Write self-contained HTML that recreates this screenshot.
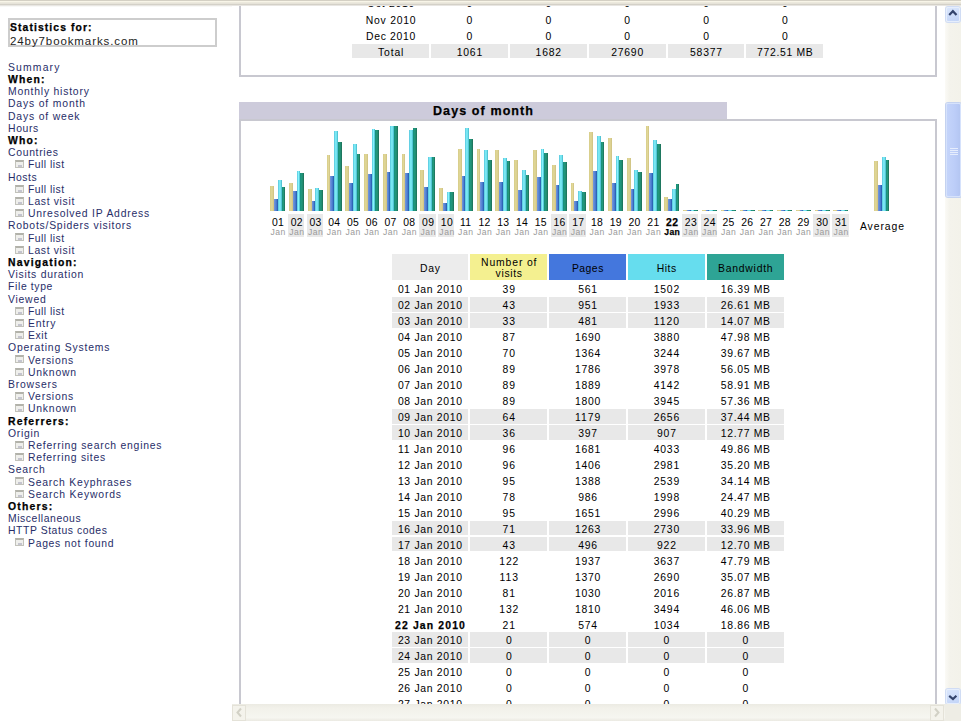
<!DOCTYPE html>
<html><head><meta charset="utf-8"><title>AWStats</title>
<style>
*{margin:0;padding:0;box-sizing:border-box}
html,body{width:961px;height:721px;overflow:hidden;background:#fff}
body{position:relative;font-family:"Liberation Sans",sans-serif;color:#000}
.a{position:absolute;white-space:nowrap;line-height:1}
#strip{position:absolute;left:0;top:0;width:961px;height:7px}
#strip div{height:1px}
#main{position:absolute;left:232px;top:6px;width:713px;height:698px;overflow:hidden;background:#fff}
.ic{position:absolute;width:9px;height:8px;background:#efefec;border:1px solid #c2c2bb;border-top:2px solid #b2b2aa}
.ic:after{content:"";position:absolute;left:2px;top:3px;width:4px;height:2px;background:#c4c4ce}
.r{position:absolute}
</style></head><body>

<div id="strip"><div style="background:#d4d0c4"></div><div style="background:#f8f5e8"></div><div style="background:#ece9dd"></div><div style="background:#e6e3d9"></div><div style="background:#d4d1c8"></div><div style="background:#e8e6e2"></div><div style="background:#f8f8f6"></div></div>
<div class="r" style="left:8px;top:18px;width:209px;height:29px;border:2px solid #cdcdcd"></div>
<div class="a" style="left:10.00px;top:23.30px;font-size:10.40px;letter-spacing:1.080px;font-weight:bold;-webkit-text-stroke:0.25px currentColor;">Statistics for:</div>
<div class="a" style="left:10.00px;top:35.53px;font-size:11.50px;letter-spacing:0.900px;color:#222;">24by7bookmarks.com</div>
<div class="a" style="left:8.00px;top:62.70px;font-size:10.40px;letter-spacing:1.155px;color:#272d68;">Summary</div>
<div class="a" style="left:8.00px;top:74.90px;font-size:10.40px;letter-spacing:1.200px;font-weight:bold;-webkit-text-stroke:0.25px currentColor;">When:</div>
<div class="a" style="left:8.00px;top:87.10px;font-size:10.40px;letter-spacing:0.785px;color:#272d68;">Monthly history</div>
<div class="a" style="left:8.00px;top:99.30px;font-size:10.40px;letter-spacing:0.838px;color:#272d68;">Days of month</div>
<div class="a" style="left:8.00px;top:111.50px;font-size:10.40px;letter-spacing:0.824px;color:#272d68;">Days of week</div>
<div class="a" style="left:8.00px;top:123.70px;font-size:10.40px;letter-spacing:0.650px;color:#272d68;">Hours</div>
<div class="a" style="left:8.00px;top:135.90px;font-size:10.40px;letter-spacing:1.200px;font-weight:bold;-webkit-text-stroke:0.25px currentColor;">Who:</div>
<div class="a" style="left:8.00px;top:148.10px;font-size:10.40px;letter-spacing:0.688px;color:#272d68;">Countries</div>
<div class="ic" style="left:15px;top:160.2px"></div>
<div class="a" style="left:28.00px;top:160.30px;font-size:10.40px;letter-spacing:0.473px;color:#272d68;">Full list</div>
<div class="a" style="left:8.00px;top:172.50px;font-size:10.40px;letter-spacing:0.506px;color:#272d68;">Hosts</div>
<div class="ic" style="left:15px;top:184.6px"></div>
<div class="a" style="left:28.00px;top:184.70px;font-size:10.40px;letter-spacing:0.473px;color:#272d68;">Full list</div>
<div class="ic" style="left:15px;top:196.8px"></div>
<div class="a" style="left:28.00px;top:196.90px;font-size:10.40px;letter-spacing:0.650px;color:#272d68;">Last visit</div>
<div class="ic" style="left:15px;top:209.0px"></div>
<div class="a" style="left:28.00px;top:209.10px;font-size:10.40px;letter-spacing:0.785px;color:#272d68;">Unresolved IP Address</div>
<div class="a" style="left:8.00px;top:221.30px;font-size:10.40px;letter-spacing:0.766px;color:#272d68;">Robots/Spiders visitors</div>
<div class="ic" style="left:15px;top:233.4px"></div>
<div class="a" style="left:28.00px;top:233.50px;font-size:10.40px;letter-spacing:0.473px;color:#272d68;">Full list</div>
<div class="ic" style="left:15px;top:245.6px"></div>
<div class="a" style="left:28.00px;top:245.70px;font-size:10.40px;letter-spacing:0.650px;color:#272d68;">Last visit</div>
<div class="a" style="left:8.00px;top:257.90px;font-size:10.40px;letter-spacing:1.200px;font-weight:bold;-webkit-text-stroke:0.25px currentColor;">Navigation:</div>
<div class="a" style="left:8.00px;top:270.10px;font-size:10.40px;letter-spacing:0.729px;color:#272d68;">Visits duration</div>
<div class="a" style="left:8.00px;top:282.30px;font-size:10.40px;letter-spacing:0.641px;color:#272d68;">File type</div>
<div class="a" style="left:8.00px;top:294.50px;font-size:10.40px;letter-spacing:0.762px;color:#272d68;">Viewed</div>
<div class="ic" style="left:15px;top:306.6px"></div>
<div class="a" style="left:28.00px;top:306.70px;font-size:10.40px;letter-spacing:0.473px;color:#272d68;">Full list</div>
<div class="ic" style="left:15px;top:318.8px"></div>
<div class="a" style="left:28.00px;top:318.90px;font-size:10.40px;letter-spacing:0.778px;color:#272d68;">Entry</div>
<div class="ic" style="left:15px;top:331.0px"></div>
<div class="a" style="left:28.00px;top:331.10px;font-size:10.40px;letter-spacing:0.595px;color:#272d68;">Exit</div>
<div class="a" style="left:8.00px;top:343.30px;font-size:10.40px;letter-spacing:0.820px;color:#272d68;">Operating Systems</div>
<div class="ic" style="left:15px;top:355.4px"></div>
<div class="a" style="left:28.00px;top:355.50px;font-size:10.40px;letter-spacing:0.766px;color:#272d68;">Versions</div>
<div class="ic" style="left:15px;top:367.6px"></div>
<div class="a" style="left:28.00px;top:367.70px;font-size:10.40px;letter-spacing:0.782px;color:#272d68;">Unknown</div>
<div class="a" style="left:8.00px;top:379.90px;font-size:10.40px;letter-spacing:0.803px;color:#272d68;">Browsers</div>
<div class="ic" style="left:15px;top:392.0px"></div>
<div class="a" style="left:28.00px;top:392.10px;font-size:10.40px;letter-spacing:0.766px;color:#272d68;">Versions</div>
<div class="ic" style="left:15px;top:404.2px"></div>
<div class="a" style="left:28.00px;top:404.30px;font-size:10.40px;letter-spacing:0.782px;color:#272d68;">Unknown</div>
<div class="a" style="left:8.00px;top:416.50px;font-size:10.40px;letter-spacing:1.200px;font-weight:bold;-webkit-text-stroke:0.25px currentColor;">Referrers:</div>
<div class="a" style="left:8.00px;top:428.70px;font-size:10.40px;letter-spacing:0.698px;color:#272d68;">Origin</div>
<div class="ic" style="left:15px;top:440.8px"></div>
<div class="a" style="left:28.00px;top:440.90px;font-size:10.40px;letter-spacing:0.755px;color:#272d68;">Referring search engines</div>
<div class="ic" style="left:15px;top:453.0px"></div>
<div class="a" style="left:28.00px;top:453.10px;font-size:10.40px;letter-spacing:0.726px;color:#272d68;">Referring sites</div>
<div class="a" style="left:8.00px;top:465.30px;font-size:10.40px;letter-spacing:0.767px;color:#272d68;">Search</div>
<div class="ic" style="left:15px;top:477.4px"></div>
<div class="a" style="left:28.00px;top:477.50px;font-size:10.40px;letter-spacing:0.793px;color:#272d68;">Search Keyphrases</div>
<div class="ic" style="left:15px;top:489.6px"></div>
<div class="a" style="left:28.00px;top:489.70px;font-size:10.40px;letter-spacing:0.827px;color:#272d68;">Search Keywords</div>
<div class="a" style="left:8.00px;top:501.90px;font-size:10.40px;letter-spacing:1.200px;font-weight:bold;-webkit-text-stroke:0.25px currentColor;">Others:</div>
<div class="a" style="left:8.00px;top:514.10px;font-size:10.40px;letter-spacing:0.566px;color:#272d68;">Miscellaneous</div>
<div class="a" style="left:8.00px;top:526.30px;font-size:10.40px;letter-spacing:0.563px;color:#272d68;">HTTP Status codes</div>
<div class="ic" style="left:15px;top:538.4px"></div>
<div class="a" style="left:28.00px;top:538.50px;font-size:10.40px;letter-spacing:0.710px;color:#272d68;">Pages not found</div>
<div id="main">
<div class="r" style="left:7.00px;top:-6.00px;width:2.00px;height:76.50px;background:#c8c8d0;"></div>
<div class="r" style="left:703.00px;top:-6.00px;width:2.00px;height:76.50px;background:#c8c8d0;"></div>
<div class="r" style="left:7.00px;top:68.50px;width:698.00px;height:2.00px;background:#c8c8d0;"></div>
<div class="r" style="left:120.20px;top:37.50px;width:76.90px;height:14.70px;background:#e8e8e8;"></div>
<div class="r" style="left:199.05px;top:37.50px;width:76.90px;height:14.70px;background:#e8e8e8;"></div>
<div class="r" style="left:277.90px;top:37.50px;width:76.90px;height:14.70px;background:#e8e8e8;"></div>
<div class="r" style="left:356.75px;top:37.50px;width:76.90px;height:14.70px;background:#e8e8e8;"></div>
<div class="r" style="left:435.60px;top:37.50px;width:76.90px;height:14.70px;background:#e8e8e8;"></div>
<div class="r" style="left:514.45px;top:37.50px;width:76.90px;height:14.70px;background:#e8e8e8;"></div>
<div class="a" style="left:9.01px;top:-6.70px;width:300px;text-align:center;font-size:10.40px;letter-spacing:0.711px;">Oct 2010</div>
<div class="a" style="left:87.89px;top:-6.70px;width:300px;text-align:center;font-size:10.40px;letter-spacing:0.788px;">0</div>
<div class="a" style="left:166.74px;top:-6.70px;width:300px;text-align:center;font-size:10.40px;letter-spacing:0.788px;">0</div>
<div class="a" style="left:245.59px;top:-6.70px;width:300px;text-align:center;font-size:10.40px;letter-spacing:0.788px;">0</div>
<div class="a" style="left:324.44px;top:-6.70px;width:300px;text-align:center;font-size:10.40px;letter-spacing:0.788px;">0</div>
<div class="a" style="left:403.29px;top:-6.70px;width:300px;text-align:center;font-size:10.40px;letter-spacing:0.788px;">0</div>
<div class="a" style="left:9.04px;top:10.40px;width:300px;text-align:center;font-size:10.40px;letter-spacing:0.774px;">Nov 2010</div>
<div class="a" style="left:87.89px;top:10.40px;width:300px;text-align:center;font-size:10.40px;letter-spacing:0.788px;">0</div>
<div class="a" style="left:166.74px;top:10.40px;width:300px;text-align:center;font-size:10.40px;letter-spacing:0.788px;">0</div>
<div class="a" style="left:245.59px;top:10.40px;width:300px;text-align:center;font-size:10.40px;letter-spacing:0.788px;">0</div>
<div class="a" style="left:324.44px;top:10.40px;width:300px;text-align:center;font-size:10.40px;letter-spacing:0.788px;">0</div>
<div class="a" style="left:403.29px;top:10.40px;width:300px;text-align:center;font-size:10.40px;letter-spacing:0.788px;">0</div>
<div class="a" style="left:8.98px;top:26.30px;width:300px;text-align:center;font-size:10.40px;letter-spacing:0.657px;">Dec 2010</div>
<div class="a" style="left:87.89px;top:26.30px;width:300px;text-align:center;font-size:10.40px;letter-spacing:0.788px;">0</div>
<div class="a" style="left:166.74px;top:26.30px;width:300px;text-align:center;font-size:10.40px;letter-spacing:0.788px;">0</div>
<div class="a" style="left:245.59px;top:26.30px;width:300px;text-align:center;font-size:10.40px;letter-spacing:0.788px;">0</div>
<div class="a" style="left:324.44px;top:26.30px;width:300px;text-align:center;font-size:10.40px;letter-spacing:0.788px;">0</div>
<div class="a" style="left:403.29px;top:26.30px;width:300px;text-align:center;font-size:10.40px;letter-spacing:0.788px;">0</div>
<div class="a" style="left:9.08px;top:42.20px;width:300px;text-align:center;font-size:10.40px;letter-spacing:0.865px;">Total</div>
<div class="a" style="left:87.89px;top:42.20px;width:300px;text-align:center;font-size:10.40px;letter-spacing:0.788px;">1061</div>
<div class="a" style="left:166.74px;top:42.20px;width:300px;text-align:center;font-size:10.40px;letter-spacing:0.788px;">1682</div>
<div class="a" style="left:245.59px;top:42.20px;width:300px;text-align:center;font-size:10.40px;letter-spacing:0.788px;">27690</div>
<div class="a" style="left:324.44px;top:42.20px;width:300px;text-align:center;font-size:10.40px;letter-spacing:0.788px;">58377</div>
<div class="a" style="left:403.24px;top:42.20px;width:300px;text-align:center;font-size:10.40px;letter-spacing:0.672px;">772.51 MB</div>
<div class="r" style="left:7.00px;top:95.70px;width:488.00px;height:19.30px;background:#cdcbdb;"></div>
<div class="a" style="left:101.55px;top:98.60px;width:300px;text-align:center;font-size:12.50px;letter-spacing:1.100px;font-weight:bold;-webkit-text-stroke:0.25px currentColor;">Days of month</div>
<div class="r" style="left:7.00px;top:113.00px;width:698.00px;height:602.00px;background:#c8c8d0;"></div>
<div class="r" style="left:9.00px;top:115.00px;width:694.00px;height:600.00px;background:#fff;"></div>
<div class="r" style="left:38.25px;top:179.66px;width:3.75px;height:25.34px;background:linear-gradient(90deg,#d6cc88,#e2d898 50%,#cdc080);"></div>
<div class="r" style="left:42.00px;top:192.80px;width:3.75px;height:12.20px;background:linear-gradient(90deg,#7898dc,#4a7cd0 60%,#2058a8);"></div>
<div class="r" style="left:45.75px;top:174.03px;width:3.75px;height:30.97px;background:linear-gradient(90deg,#58c4dc,#84f4fc 50%,#44b4c8);"></div>
<div class="r" style="left:49.50px;top:180.60px;width:3.75px;height:24.40px;background:linear-gradient(90deg,#14907c,#24987c 50%,#1c6c54);"></div>
<div class="a" style="left:-104.00px;top:212.10px;width:300px;text-align:center;font-size:10.40px;letter-spacing:0.300px;">01</div>
<div class="a" style="left:-103.90px;top:221.91px;width:300px;text-align:center;font-size:8.60px;letter-spacing:0.500px;color:#9a9a9a;">Jan</div>
<div class="r" style="left:55.82px;top:208.20px;width:16.40px;height:22.80px;background:#e9e9e9;"></div>
<div class="r" style="left:57.02px;top:176.84px;width:3.75px;height:28.16px;background:linear-gradient(90deg,#d6cc88,#e2d898 50%,#cdc080);"></div>
<div class="r" style="left:60.77px;top:185.29px;width:3.75px;height:19.71px;background:linear-gradient(90deg,#7898dc,#4a7cd0 60%,#2058a8);"></div>
<div class="r" style="left:64.52px;top:164.64px;width:3.75px;height:40.36px;background:linear-gradient(90deg,#58c4dc,#84f4fc 50%,#44b4c8);"></div>
<div class="r" style="left:68.27px;top:166.52px;width:3.75px;height:38.48px;background:linear-gradient(90deg,#14907c,#24987c 50%,#1c6c54);"></div>
<div class="a" style="left:-85.23px;top:212.10px;width:300px;text-align:center;font-size:10.40px;letter-spacing:0.300px;">02</div>
<div class="a" style="left:-85.13px;top:221.91px;width:300px;text-align:center;font-size:8.60px;letter-spacing:0.500px;color:#9a9a9a;">Jan</div>
<div class="r" style="left:74.59px;top:208.20px;width:16.40px;height:22.80px;background:#e9e9e9;"></div>
<div class="r" style="left:75.79px;top:183.41px;width:3.75px;height:21.59px;background:linear-gradient(90deg,#d6cc88,#e2d898 50%,#cdc080);"></div>
<div class="r" style="left:79.54px;top:194.68px;width:3.75px;height:10.32px;background:linear-gradient(90deg,#7898dc,#4a7cd0 60%,#2058a8);"></div>
<div class="r" style="left:83.29px;top:181.54px;width:3.75px;height:23.46px;background:linear-gradient(90deg,#58c4dc,#84f4fc 50%,#44b4c8);"></div>
<div class="r" style="left:87.04px;top:184.35px;width:3.75px;height:20.65px;background:linear-gradient(90deg,#14907c,#24987c 50%,#1c6c54);"></div>
<div class="a" style="left:-66.46px;top:212.10px;width:300px;text-align:center;font-size:10.40px;letter-spacing:0.300px;">03</div>
<div class="a" style="left:-66.36px;top:221.91px;width:300px;text-align:center;font-size:8.60px;letter-spacing:0.500px;color:#9a9a9a;">Jan</div>
<div class="r" style="left:94.56px;top:148.69px;width:3.75px;height:56.31px;background:linear-gradient(90deg,#d6cc88,#e2d898 50%,#cdc080);"></div>
<div class="r" style="left:98.31px;top:170.28px;width:3.75px;height:34.72px;background:linear-gradient(90deg,#7898dc,#4a7cd0 60%,#2058a8);"></div>
<div class="r" style="left:102.06px;top:125.23px;width:3.75px;height:79.77px;background:linear-gradient(90deg,#58c4dc,#84f4fc 50%,#44b4c8);"></div>
<div class="r" style="left:105.81px;top:135.55px;width:3.75px;height:69.45px;background:linear-gradient(90deg,#14907c,#24987c 50%,#1c6c54);"></div>
<div class="a" style="left:-47.69px;top:212.10px;width:300px;text-align:center;font-size:10.40px;letter-spacing:0.300px;">04</div>
<div class="a" style="left:-47.59px;top:221.91px;width:300px;text-align:center;font-size:8.60px;letter-spacing:0.500px;color:#9a9a9a;">Jan</div>
<div class="r" style="left:113.33px;top:159.95px;width:3.75px;height:45.05px;background:linear-gradient(90deg,#d6cc88,#e2d898 50%,#cdc080);"></div>
<div class="r" style="left:117.08px;top:176.84px;width:3.75px;height:28.16px;background:linear-gradient(90deg,#7898dc,#4a7cd0 60%,#2058a8);"></div>
<div class="r" style="left:120.83px;top:138.37px;width:3.75px;height:66.63px;background:linear-gradient(90deg,#58c4dc,#84f4fc 50%,#44b4c8);"></div>
<div class="r" style="left:124.58px;top:147.75px;width:3.75px;height:57.25px;background:linear-gradient(90deg,#14907c,#24987c 50%,#1c6c54);"></div>
<div class="a" style="left:-28.92px;top:212.10px;width:300px;text-align:center;font-size:10.40px;letter-spacing:0.300px;">05</div>
<div class="a" style="left:-28.82px;top:221.91px;width:300px;text-align:center;font-size:8.60px;letter-spacing:0.500px;color:#9a9a9a;">Jan</div>
<div class="r" style="left:132.10px;top:147.75px;width:3.75px;height:57.25px;background:linear-gradient(90deg,#d6cc88,#e2d898 50%,#cdc080);"></div>
<div class="r" style="left:135.85px;top:168.40px;width:3.75px;height:36.60px;background:linear-gradient(90deg,#7898dc,#4a7cd0 60%,#2058a8);"></div>
<div class="r" style="left:139.60px;top:123.35px;width:3.75px;height:81.65px;background:linear-gradient(90deg,#58c4dc,#84f4fc 50%,#44b4c8);"></div>
<div class="r" style="left:143.35px;top:124.29px;width:3.75px;height:80.71px;background:linear-gradient(90deg,#14907c,#24987c 50%,#1c6c54);"></div>
<div class="a" style="left:-10.15px;top:212.10px;width:300px;text-align:center;font-size:10.40px;letter-spacing:0.300px;">06</div>
<div class="a" style="left:-10.05px;top:221.91px;width:300px;text-align:center;font-size:8.60px;letter-spacing:0.500px;color:#9a9a9a;">Jan</div>
<div class="r" style="left:150.87px;top:147.75px;width:3.75px;height:57.25px;background:linear-gradient(90deg,#d6cc88,#e2d898 50%,#cdc080);"></div>
<div class="r" style="left:154.62px;top:165.58px;width:3.75px;height:39.42px;background:linear-gradient(90deg,#7898dc,#4a7cd0 60%,#2058a8);"></div>
<div class="r" style="left:158.37px;top:119.60px;width:3.75px;height:85.40px;background:linear-gradient(90deg,#58c4dc,#84f4fc 50%,#44b4c8);"></div>
<div class="r" style="left:162.12px;top:119.60px;width:3.75px;height:85.40px;background:linear-gradient(90deg,#14907c,#24987c 50%,#1c6c54);"></div>
<div class="a" style="left:8.62px;top:212.10px;width:300px;text-align:center;font-size:10.40px;letter-spacing:0.300px;">07</div>
<div class="a" style="left:8.72px;top:221.91px;width:300px;text-align:center;font-size:8.60px;letter-spacing:0.500px;color:#9a9a9a;">Jan</div>
<div class="r" style="left:169.64px;top:147.75px;width:3.75px;height:57.25px;background:linear-gradient(90deg,#d6cc88,#e2d898 50%,#cdc080);"></div>
<div class="r" style="left:173.39px;top:167.46px;width:3.75px;height:37.54px;background:linear-gradient(90deg,#7898dc,#4a7cd0 60%,#2058a8);"></div>
<div class="r" style="left:177.14px;top:124.29px;width:3.75px;height:80.71px;background:linear-gradient(90deg,#58c4dc,#84f4fc 50%,#44b4c8);"></div>
<div class="r" style="left:180.89px;top:122.41px;width:3.75px;height:82.59px;background:linear-gradient(90deg,#14907c,#24987c 50%,#1c6c54);"></div>
<div class="a" style="left:27.39px;top:212.10px;width:300px;text-align:center;font-size:10.40px;letter-spacing:0.300px;">08</div>
<div class="a" style="left:27.49px;top:221.91px;width:300px;text-align:center;font-size:8.60px;letter-spacing:0.500px;color:#9a9a9a;">Jan</div>
<div class="r" style="left:187.21px;top:208.20px;width:16.40px;height:22.80px;background:#e9e9e9;"></div>
<div class="r" style="left:188.41px;top:163.71px;width:3.75px;height:41.29px;background:linear-gradient(90deg,#d6cc88,#e2d898 50%,#cdc080);"></div>
<div class="r" style="left:192.16px;top:180.60px;width:3.75px;height:24.40px;background:linear-gradient(90deg,#7898dc,#4a7cd0 60%,#2058a8);"></div>
<div class="r" style="left:195.91px;top:150.57px;width:3.75px;height:54.43px;background:linear-gradient(90deg,#58c4dc,#84f4fc 50%,#44b4c8);"></div>
<div class="r" style="left:199.66px;top:150.57px;width:3.75px;height:54.43px;background:linear-gradient(90deg,#14907c,#24987c 50%,#1c6c54);"></div>
<div class="a" style="left:46.16px;top:212.10px;width:300px;text-align:center;font-size:10.40px;letter-spacing:0.300px;">09</div>
<div class="a" style="left:46.26px;top:221.91px;width:300px;text-align:center;font-size:8.60px;letter-spacing:0.500px;color:#9a9a9a;">Jan</div>
<div class="r" style="left:205.98px;top:208.20px;width:16.40px;height:22.80px;background:#e9e9e9;"></div>
<div class="r" style="left:207.18px;top:181.54px;width:3.75px;height:23.46px;background:linear-gradient(90deg,#d6cc88,#e2d898 50%,#cdc080);"></div>
<div class="r" style="left:210.93px;top:196.55px;width:3.75px;height:8.45px;background:linear-gradient(90deg,#7898dc,#4a7cd0 60%,#2058a8);"></div>
<div class="r" style="left:214.68px;top:186.23px;width:3.75px;height:18.77px;background:linear-gradient(90deg,#58c4dc,#84f4fc 50%,#44b4c8);"></div>
<div class="r" style="left:218.43px;top:186.23px;width:3.75px;height:18.77px;background:linear-gradient(90deg,#14907c,#24987c 50%,#1c6c54);"></div>
<div class="a" style="left:64.93px;top:212.10px;width:300px;text-align:center;font-size:10.40px;letter-spacing:0.300px;">10</div>
<div class="a" style="left:65.03px;top:221.91px;width:300px;text-align:center;font-size:8.60px;letter-spacing:0.500px;color:#9a9a9a;">Jan</div>
<div class="r" style="left:225.95px;top:143.06px;width:3.75px;height:61.94px;background:linear-gradient(90deg,#d6cc88,#e2d898 50%,#cdc080);"></div>
<div class="r" style="left:229.70px;top:170.28px;width:3.75px;height:34.72px;background:linear-gradient(90deg,#7898dc,#4a7cd0 60%,#2058a8);"></div>
<div class="r" style="left:233.45px;top:122.41px;width:3.75px;height:82.59px;background:linear-gradient(90deg,#58c4dc,#84f4fc 50%,#44b4c8);"></div>
<div class="r" style="left:237.20px;top:132.74px;width:3.75px;height:72.26px;background:linear-gradient(90deg,#14907c,#24987c 50%,#1c6c54);"></div>
<div class="a" style="left:83.70px;top:212.10px;width:300px;text-align:center;font-size:10.40px;letter-spacing:0.300px;">11</div>
<div class="a" style="left:83.80px;top:221.91px;width:300px;text-align:center;font-size:8.60px;letter-spacing:0.500px;color:#9a9a9a;">Jan</div>
<div class="r" style="left:244.72px;top:143.06px;width:3.75px;height:61.94px;background:linear-gradient(90deg,#d6cc88,#e2d898 50%,#cdc080);"></div>
<div class="r" style="left:248.47px;top:175.91px;width:3.75px;height:29.09px;background:linear-gradient(90deg,#7898dc,#4a7cd0 60%,#2058a8);"></div>
<div class="r" style="left:252.22px;top:144.00px;width:3.75px;height:61.00px;background:linear-gradient(90deg,#58c4dc,#84f4fc 50%,#44b4c8);"></div>
<div class="r" style="left:255.97px;top:154.32px;width:3.75px;height:50.68px;background:linear-gradient(90deg,#14907c,#24987c 50%,#1c6c54);"></div>
<div class="a" style="left:102.47px;top:212.10px;width:300px;text-align:center;font-size:10.40px;letter-spacing:0.300px;">12</div>
<div class="a" style="left:102.57px;top:221.91px;width:300px;text-align:center;font-size:8.60px;letter-spacing:0.500px;color:#9a9a9a;">Jan</div>
<div class="r" style="left:263.49px;top:144.00px;width:3.75px;height:61.00px;background:linear-gradient(90deg,#d6cc88,#e2d898 50%,#cdc080);"></div>
<div class="r" style="left:267.24px;top:175.91px;width:3.75px;height:29.09px;background:linear-gradient(90deg,#7898dc,#4a7cd0 60%,#2058a8);"></div>
<div class="r" style="left:270.99px;top:152.44px;width:3.75px;height:52.56px;background:linear-gradient(90deg,#58c4dc,#84f4fc 50%,#44b4c8);"></div>
<div class="r" style="left:274.74px;top:155.26px;width:3.75px;height:49.74px;background:linear-gradient(90deg,#14907c,#24987c 50%,#1c6c54);"></div>
<div class="a" style="left:121.24px;top:212.10px;width:300px;text-align:center;font-size:10.40px;letter-spacing:0.300px;">13</div>
<div class="a" style="left:121.34px;top:221.91px;width:300px;text-align:center;font-size:8.60px;letter-spacing:0.500px;color:#9a9a9a;">Jan</div>
<div class="r" style="left:282.26px;top:154.32px;width:3.75px;height:50.68px;background:linear-gradient(90deg,#d6cc88,#e2d898 50%,#cdc080);"></div>
<div class="r" style="left:286.01px;top:184.35px;width:3.75px;height:20.65px;background:linear-gradient(90deg,#7898dc,#4a7cd0 60%,#2058a8);"></div>
<div class="r" style="left:289.76px;top:163.71px;width:3.75px;height:41.29px;background:linear-gradient(90deg,#58c4dc,#84f4fc 50%,#44b4c8);"></div>
<div class="r" style="left:293.51px;top:169.34px;width:3.75px;height:35.66px;background:linear-gradient(90deg,#14907c,#24987c 50%,#1c6c54);"></div>
<div class="a" style="left:140.01px;top:212.10px;width:300px;text-align:center;font-size:10.40px;letter-spacing:0.300px;">14</div>
<div class="a" style="left:140.11px;top:221.91px;width:300px;text-align:center;font-size:8.60px;letter-spacing:0.500px;color:#9a9a9a;">Jan</div>
<div class="r" style="left:301.03px;top:144.00px;width:3.75px;height:61.00px;background:linear-gradient(90deg,#d6cc88,#e2d898 50%,#cdc080);"></div>
<div class="r" style="left:304.78px;top:171.21px;width:3.75px;height:33.79px;background:linear-gradient(90deg,#7898dc,#4a7cd0 60%,#2058a8);"></div>
<div class="r" style="left:308.53px;top:143.06px;width:3.75px;height:61.94px;background:linear-gradient(90deg,#58c4dc,#84f4fc 50%,#44b4c8);"></div>
<div class="r" style="left:312.28px;top:146.81px;width:3.75px;height:58.19px;background:linear-gradient(90deg,#14907c,#24987c 50%,#1c6c54);"></div>
<div class="a" style="left:158.78px;top:212.10px;width:300px;text-align:center;font-size:10.40px;letter-spacing:0.300px;">15</div>
<div class="a" style="left:158.88px;top:221.91px;width:300px;text-align:center;font-size:8.60px;letter-spacing:0.500px;color:#9a9a9a;">Jan</div>
<div class="r" style="left:318.60px;top:208.20px;width:16.40px;height:22.80px;background:#e9e9e9;"></div>
<div class="r" style="left:319.80px;top:159.01px;width:3.75px;height:45.99px;background:linear-gradient(90deg,#d6cc88,#e2d898 50%,#cdc080);"></div>
<div class="r" style="left:323.55px;top:178.72px;width:3.75px;height:26.28px;background:linear-gradient(90deg,#7898dc,#4a7cd0 60%,#2058a8);"></div>
<div class="r" style="left:327.30px;top:148.69px;width:3.75px;height:56.31px;background:linear-gradient(90deg,#58c4dc,#84f4fc 50%,#44b4c8);"></div>
<div class="r" style="left:331.05px;top:156.20px;width:3.75px;height:48.80px;background:linear-gradient(90deg,#14907c,#24987c 50%,#1c6c54);"></div>
<div class="a" style="left:177.55px;top:212.10px;width:300px;text-align:center;font-size:10.40px;letter-spacing:0.300px;">16</div>
<div class="a" style="left:177.65px;top:221.91px;width:300px;text-align:center;font-size:8.60px;letter-spacing:0.500px;color:#9a9a9a;">Jan</div>
<div class="r" style="left:337.37px;top:208.20px;width:16.40px;height:22.80px;background:#e9e9e9;"></div>
<div class="r" style="left:338.57px;top:176.84px;width:3.75px;height:28.16px;background:linear-gradient(90deg,#d6cc88,#e2d898 50%,#cdc080);"></div>
<div class="r" style="left:342.32px;top:194.68px;width:3.75px;height:10.32px;background:linear-gradient(90deg,#7898dc,#4a7cd0 60%,#2058a8);"></div>
<div class="r" style="left:346.07px;top:185.29px;width:3.75px;height:19.71px;background:linear-gradient(90deg,#58c4dc,#84f4fc 50%,#44b4c8);"></div>
<div class="r" style="left:349.82px;top:186.23px;width:3.75px;height:18.77px;background:linear-gradient(90deg,#14907c,#24987c 50%,#1c6c54);"></div>
<div class="a" style="left:196.32px;top:212.10px;width:300px;text-align:center;font-size:10.40px;letter-spacing:0.300px;">17</div>
<div class="a" style="left:196.42px;top:221.91px;width:300px;text-align:center;font-size:8.60px;letter-spacing:0.500px;color:#9a9a9a;">Jan</div>
<div class="r" style="left:357.34px;top:126.17px;width:3.75px;height:78.83px;background:linear-gradient(90deg,#d6cc88,#e2d898 50%,#cdc080);"></div>
<div class="r" style="left:361.09px;top:164.64px;width:3.75px;height:40.36px;background:linear-gradient(90deg,#7898dc,#4a7cd0 60%,#2058a8);"></div>
<div class="r" style="left:364.84px;top:129.92px;width:3.75px;height:75.08px;background:linear-gradient(90deg,#58c4dc,#84f4fc 50%,#44b4c8);"></div>
<div class="r" style="left:368.59px;top:135.55px;width:3.75px;height:69.45px;background:linear-gradient(90deg,#14907c,#24987c 50%,#1c6c54);"></div>
<div class="a" style="left:215.09px;top:212.10px;width:300px;text-align:center;font-size:10.40px;letter-spacing:0.300px;">18</div>
<div class="a" style="left:215.19px;top:221.91px;width:300px;text-align:center;font-size:8.60px;letter-spacing:0.500px;color:#9a9a9a;">Jan</div>
<div class="r" style="left:376.11px;top:131.80px;width:3.75px;height:73.20px;background:linear-gradient(90deg,#d6cc88,#e2d898 50%,#cdc080);"></div>
<div class="r" style="left:379.86px;top:176.84px;width:3.75px;height:28.16px;background:linear-gradient(90deg,#7898dc,#4a7cd0 60%,#2058a8);"></div>
<div class="r" style="left:383.61px;top:149.63px;width:3.75px;height:55.37px;background:linear-gradient(90deg,#58c4dc,#84f4fc 50%,#44b4c8);"></div>
<div class="r" style="left:387.36px;top:154.32px;width:3.75px;height:50.68px;background:linear-gradient(90deg,#14907c,#24987c 50%,#1c6c54);"></div>
<div class="a" style="left:233.86px;top:212.10px;width:300px;text-align:center;font-size:10.40px;letter-spacing:0.300px;">19</div>
<div class="a" style="left:233.96px;top:221.91px;width:300px;text-align:center;font-size:8.60px;letter-spacing:0.500px;color:#9a9a9a;">Jan</div>
<div class="r" style="left:394.88px;top:152.44px;width:3.75px;height:52.56px;background:linear-gradient(90deg,#d6cc88,#e2d898 50%,#cdc080);"></div>
<div class="r" style="left:398.63px;top:183.41px;width:3.75px;height:21.59px;background:linear-gradient(90deg,#7898dc,#4a7cd0 60%,#2058a8);"></div>
<div class="r" style="left:402.38px;top:163.71px;width:3.75px;height:41.29px;background:linear-gradient(90deg,#58c4dc,#84f4fc 50%,#44b4c8);"></div>
<div class="r" style="left:406.13px;top:165.58px;width:3.75px;height:39.42px;background:linear-gradient(90deg,#14907c,#24987c 50%,#1c6c54);"></div>
<div class="a" style="left:252.63px;top:212.10px;width:300px;text-align:center;font-size:10.40px;letter-spacing:0.300px;">20</div>
<div class="a" style="left:252.73px;top:221.91px;width:300px;text-align:center;font-size:8.60px;letter-spacing:0.500px;color:#9a9a9a;">Jan</div>
<div class="r" style="left:413.65px;top:119.60px;width:3.75px;height:85.40px;background:linear-gradient(90deg,#d6cc88,#e2d898 50%,#cdc080);"></div>
<div class="r" style="left:417.40px;top:167.46px;width:3.75px;height:37.54px;background:linear-gradient(90deg,#7898dc,#4a7cd0 60%,#2058a8);"></div>
<div class="r" style="left:421.15px;top:133.67px;width:3.75px;height:71.33px;background:linear-gradient(90deg,#58c4dc,#84f4fc 50%,#44b4c8);"></div>
<div class="r" style="left:424.90px;top:138.37px;width:3.75px;height:66.63px;background:linear-gradient(90deg,#14907c,#24987c 50%,#1c6c54);"></div>
<div class="a" style="left:271.40px;top:212.10px;width:300px;text-align:center;font-size:10.40px;letter-spacing:0.300px;">21</div>
<div class="a" style="left:271.50px;top:221.91px;width:300px;text-align:center;font-size:8.60px;letter-spacing:0.500px;color:#9a9a9a;">Jan</div>
<div class="r" style="left:432.42px;top:190.92px;width:3.75px;height:14.08px;background:linear-gradient(90deg,#d6cc88,#e2d898 50%,#cdc080);"></div>
<div class="r" style="left:436.17px;top:192.80px;width:3.75px;height:12.20px;background:linear-gradient(90deg,#7898dc,#4a7cd0 60%,#2058a8);"></div>
<div class="r" style="left:439.92px;top:183.41px;width:3.75px;height:21.59px;background:linear-gradient(90deg,#58c4dc,#84f4fc 50%,#44b4c8);"></div>
<div class="r" style="left:443.67px;top:177.78px;width:3.75px;height:27.22px;background:linear-gradient(90deg,#14907c,#24987c 50%,#1c6c54);"></div>
<div class="a" style="left:290.17px;top:212.10px;width:300px;text-align:center;font-size:10.40px;letter-spacing:0.300px;font-weight:bold;-webkit-text-stroke:0.25px currentColor;">22</div>
<div class="a" style="left:290.17px;top:221.91px;width:300px;text-align:center;font-size:8.60px;letter-spacing:0.300px;font-weight:bold;-webkit-text-stroke:0.25px currentColor;">Jan</div>
<div class="r" style="left:449.99px;top:208.20px;width:16.40px;height:22.80px;background:#e9e9e9;"></div>
<div class="r" style="left:451.19px;top:204.06px;width:3.75px;height:0.94px;background:linear-gradient(90deg,#d6cc88,#e2d898 50%,#cdc080);"></div>
<div class="r" style="left:454.94px;top:204.06px;width:3.75px;height:0.94px;background:linear-gradient(90deg,#7898dc,#4a7cd0 60%,#2058a8);"></div>
<div class="r" style="left:458.69px;top:204.06px;width:3.75px;height:0.94px;background:linear-gradient(90deg,#58c4dc,#84f4fc 50%,#44b4c8);"></div>
<div class="r" style="left:462.44px;top:204.06px;width:3.75px;height:0.94px;background:linear-gradient(90deg,#14907c,#24987c 50%,#1c6c54);"></div>
<div class="a" style="left:308.94px;top:212.10px;width:300px;text-align:center;font-size:10.40px;letter-spacing:0.300px;">23</div>
<div class="a" style="left:309.04px;top:221.91px;width:300px;text-align:center;font-size:8.60px;letter-spacing:0.500px;color:#9a9a9a;">Jan</div>
<div class="r" style="left:468.76px;top:208.20px;width:16.40px;height:22.80px;background:#e9e9e9;"></div>
<div class="r" style="left:469.96px;top:204.06px;width:3.75px;height:0.94px;background:linear-gradient(90deg,#d6cc88,#e2d898 50%,#cdc080);"></div>
<div class="r" style="left:473.71px;top:204.06px;width:3.75px;height:0.94px;background:linear-gradient(90deg,#7898dc,#4a7cd0 60%,#2058a8);"></div>
<div class="r" style="left:477.46px;top:204.06px;width:3.75px;height:0.94px;background:linear-gradient(90deg,#58c4dc,#84f4fc 50%,#44b4c8);"></div>
<div class="r" style="left:481.21px;top:204.06px;width:3.75px;height:0.94px;background:linear-gradient(90deg,#14907c,#24987c 50%,#1c6c54);"></div>
<div class="a" style="left:327.71px;top:212.10px;width:300px;text-align:center;font-size:10.40px;letter-spacing:0.300px;">24</div>
<div class="a" style="left:327.81px;top:221.91px;width:300px;text-align:center;font-size:8.60px;letter-spacing:0.500px;color:#9a9a9a;">Jan</div>
<div class="r" style="left:488.73px;top:204.06px;width:3.75px;height:0.94px;background:linear-gradient(90deg,#d6cc88,#e2d898 50%,#cdc080);"></div>
<div class="r" style="left:492.48px;top:204.06px;width:3.75px;height:0.94px;background:linear-gradient(90deg,#7898dc,#4a7cd0 60%,#2058a8);"></div>
<div class="r" style="left:496.23px;top:204.06px;width:3.75px;height:0.94px;background:linear-gradient(90deg,#58c4dc,#84f4fc 50%,#44b4c8);"></div>
<div class="r" style="left:499.98px;top:204.06px;width:3.75px;height:0.94px;background:linear-gradient(90deg,#14907c,#24987c 50%,#1c6c54);"></div>
<div class="a" style="left:346.48px;top:212.10px;width:300px;text-align:center;font-size:10.40px;letter-spacing:0.300px;">25</div>
<div class="a" style="left:346.58px;top:221.91px;width:300px;text-align:center;font-size:8.60px;letter-spacing:0.500px;color:#9a9a9a;">Jan</div>
<div class="r" style="left:507.50px;top:204.06px;width:3.75px;height:0.94px;background:linear-gradient(90deg,#d6cc88,#e2d898 50%,#cdc080);"></div>
<div class="r" style="left:511.25px;top:204.06px;width:3.75px;height:0.94px;background:linear-gradient(90deg,#7898dc,#4a7cd0 60%,#2058a8);"></div>
<div class="r" style="left:515.00px;top:204.06px;width:3.75px;height:0.94px;background:linear-gradient(90deg,#58c4dc,#84f4fc 50%,#44b4c8);"></div>
<div class="r" style="left:518.75px;top:204.06px;width:3.75px;height:0.94px;background:linear-gradient(90deg,#14907c,#24987c 50%,#1c6c54);"></div>
<div class="a" style="left:365.25px;top:212.10px;width:300px;text-align:center;font-size:10.40px;letter-spacing:0.300px;">26</div>
<div class="a" style="left:365.35px;top:221.91px;width:300px;text-align:center;font-size:8.60px;letter-spacing:0.500px;color:#9a9a9a;">Jan</div>
<div class="r" style="left:526.27px;top:204.06px;width:3.75px;height:0.94px;background:linear-gradient(90deg,#d6cc88,#e2d898 50%,#cdc080);"></div>
<div class="r" style="left:530.02px;top:204.06px;width:3.75px;height:0.94px;background:linear-gradient(90deg,#7898dc,#4a7cd0 60%,#2058a8);"></div>
<div class="r" style="left:533.77px;top:204.06px;width:3.75px;height:0.94px;background:linear-gradient(90deg,#58c4dc,#84f4fc 50%,#44b4c8);"></div>
<div class="r" style="left:537.52px;top:204.06px;width:3.75px;height:0.94px;background:linear-gradient(90deg,#14907c,#24987c 50%,#1c6c54);"></div>
<div class="a" style="left:384.02px;top:212.10px;width:300px;text-align:center;font-size:10.40px;letter-spacing:0.300px;">27</div>
<div class="a" style="left:384.12px;top:221.91px;width:300px;text-align:center;font-size:8.60px;letter-spacing:0.500px;color:#9a9a9a;">Jan</div>
<div class="r" style="left:545.04px;top:204.06px;width:3.75px;height:0.94px;background:linear-gradient(90deg,#d6cc88,#e2d898 50%,#cdc080);"></div>
<div class="r" style="left:548.79px;top:204.06px;width:3.75px;height:0.94px;background:linear-gradient(90deg,#7898dc,#4a7cd0 60%,#2058a8);"></div>
<div class="r" style="left:552.54px;top:204.06px;width:3.75px;height:0.94px;background:linear-gradient(90deg,#58c4dc,#84f4fc 50%,#44b4c8);"></div>
<div class="r" style="left:556.29px;top:204.06px;width:3.75px;height:0.94px;background:linear-gradient(90deg,#14907c,#24987c 50%,#1c6c54);"></div>
<div class="a" style="left:402.79px;top:212.10px;width:300px;text-align:center;font-size:10.40px;letter-spacing:0.300px;">28</div>
<div class="a" style="left:402.89px;top:221.91px;width:300px;text-align:center;font-size:8.60px;letter-spacing:0.500px;color:#9a9a9a;">Jan</div>
<div class="r" style="left:563.81px;top:204.06px;width:3.75px;height:0.94px;background:linear-gradient(90deg,#d6cc88,#e2d898 50%,#cdc080);"></div>
<div class="r" style="left:567.56px;top:204.06px;width:3.75px;height:0.94px;background:linear-gradient(90deg,#7898dc,#4a7cd0 60%,#2058a8);"></div>
<div class="r" style="left:571.31px;top:204.06px;width:3.75px;height:0.94px;background:linear-gradient(90deg,#58c4dc,#84f4fc 50%,#44b4c8);"></div>
<div class="r" style="left:575.06px;top:204.06px;width:3.75px;height:0.94px;background:linear-gradient(90deg,#14907c,#24987c 50%,#1c6c54);"></div>
<div class="a" style="left:421.56px;top:212.10px;width:300px;text-align:center;font-size:10.40px;letter-spacing:0.300px;">29</div>
<div class="a" style="left:421.66px;top:221.91px;width:300px;text-align:center;font-size:8.60px;letter-spacing:0.500px;color:#9a9a9a;">Jan</div>
<div class="r" style="left:581.38px;top:208.20px;width:16.40px;height:22.80px;background:#e9e9e9;"></div>
<div class="r" style="left:582.58px;top:204.06px;width:3.75px;height:0.94px;background:linear-gradient(90deg,#d6cc88,#e2d898 50%,#cdc080);"></div>
<div class="r" style="left:586.33px;top:204.06px;width:3.75px;height:0.94px;background:linear-gradient(90deg,#7898dc,#4a7cd0 60%,#2058a8);"></div>
<div class="r" style="left:590.08px;top:204.06px;width:3.75px;height:0.94px;background:linear-gradient(90deg,#58c4dc,#84f4fc 50%,#44b4c8);"></div>
<div class="r" style="left:593.83px;top:204.06px;width:3.75px;height:0.94px;background:linear-gradient(90deg,#14907c,#24987c 50%,#1c6c54);"></div>
<div class="a" style="left:440.33px;top:212.10px;width:300px;text-align:center;font-size:10.40px;letter-spacing:0.300px;">30</div>
<div class="a" style="left:440.43px;top:221.91px;width:300px;text-align:center;font-size:8.60px;letter-spacing:0.500px;color:#9a9a9a;">Jan</div>
<div class="r" style="left:600.15px;top:208.20px;width:16.40px;height:22.80px;background:#e9e9e9;"></div>
<div class="r" style="left:601.35px;top:204.06px;width:3.75px;height:0.94px;background:linear-gradient(90deg,#d6cc88,#e2d898 50%,#cdc080);"></div>
<div class="r" style="left:605.10px;top:204.06px;width:3.75px;height:0.94px;background:linear-gradient(90deg,#7898dc,#4a7cd0 60%,#2058a8);"></div>
<div class="r" style="left:608.85px;top:204.06px;width:3.75px;height:0.94px;background:linear-gradient(90deg,#58c4dc,#84f4fc 50%,#44b4c8);"></div>
<div class="r" style="left:612.60px;top:204.06px;width:3.75px;height:0.94px;background:linear-gradient(90deg,#14907c,#24987c 50%,#1c6c54);"></div>
<div class="a" style="left:459.10px;top:212.10px;width:300px;text-align:center;font-size:10.40px;letter-spacing:0.300px;">31</div>
<div class="a" style="left:459.20px;top:221.91px;width:300px;text-align:center;font-size:8.60px;letter-spacing:0.500px;color:#9a9a9a;">Jan</div>
<div class="r" style="left:642.40px;top:155.26px;width:3.75px;height:49.74px;background:linear-gradient(90deg,#d6cc88,#e2d898 50%,#cdc080);"></div>
<div class="r" style="left:646.15px;top:178.72px;width:3.75px;height:26.28px;background:linear-gradient(90deg,#7898dc,#4a7cd0 60%,#2058a8);"></div>
<div class="r" style="left:649.90px;top:150.57px;width:3.75px;height:54.43px;background:linear-gradient(90deg,#58c4dc,#84f4fc 50%,#44b4c8);"></div>
<div class="r" style="left:653.65px;top:154.32px;width:3.75px;height:50.68px;background:linear-gradient(90deg,#14907c,#24987c 50%,#1c6c54);"></div>
<div class="a" style="left:500.47px;top:216.30px;width:300px;text-align:center;font-size:10.40px;letter-spacing:0.933px;">Average</div>
<div class="r" style="left:159.50px;top:247.50px;width:76.90px;height:26.20px;background:#ececec;"></div>
<div class="a" style="left:48.31px;top:257.70px;width:300px;text-align:center;font-size:10.40px;letter-spacing:0.721px;">Day</div>
<div class="r" style="left:238.35px;top:247.50px;width:76.90px;height:26.20px;background:#f4f090;"></div>
<div class="a" style="left:127.23px;top:251.70px;width:300px;text-align:center;font-size:10.40px;letter-spacing:0.866px;">Number of</div>
<div class="a" style="left:127.14px;top:263.20px;width:300px;text-align:center;font-size:10.40px;letter-spacing:0.687px;">visits</div>
<div class="r" style="left:317.20px;top:247.50px;width:76.90px;height:26.20px;background:#4477dd;"></div>
<div class="a" style="left:205.89px;top:257.70px;width:300px;text-align:center;font-size:10.40px;letter-spacing:0.488px;">Pages</div>
<div class="r" style="left:396.05px;top:247.50px;width:76.90px;height:26.20px;background:#66ddee;"></div>
<div class="a" style="left:284.73px;top:257.70px;width:300px;text-align:center;font-size:10.40px;letter-spacing:0.451px;">Hits</div>
<div class="r" style="left:474.90px;top:247.50px;width:76.90px;height:26.20px;background:#2ea495;"></div>
<div class="a" style="left:363.73px;top:257.70px;width:300px;text-align:center;font-size:10.40px;letter-spacing:0.760px;">Bandwidth</div>
<div class="a" style="left:48.29px;top:279.45px;width:300px;text-align:center;font-size:10.40px;letter-spacing:0.687px;">01 Jan 2010</div>
<div class="a" style="left:127.19px;top:279.45px;width:300px;text-align:center;font-size:10.40px;letter-spacing:0.788px;">39</div>
<div class="a" style="left:206.04px;top:279.45px;width:300px;text-align:center;font-size:10.40px;letter-spacing:0.788px;">561</div>
<div class="a" style="left:284.89px;top:279.45px;width:300px;text-align:center;font-size:10.40px;letter-spacing:0.788px;">1502</div>
<div class="a" style="left:363.68px;top:279.45px;width:300px;text-align:center;font-size:10.40px;letter-spacing:0.657px;">16.39 MB</div>
<div class="r" style="left:159.50px;top:291.36px;width:76.90px;height:14.60px;background:#e8e8e8;"></div>
<div class="r" style="left:238.35px;top:291.36px;width:76.90px;height:14.60px;background:#e8e8e8;"></div>
<div class="r" style="left:317.20px;top:291.36px;width:76.90px;height:14.60px;background:#e8e8e8;"></div>
<div class="r" style="left:396.05px;top:291.36px;width:76.90px;height:14.60px;background:#e8e8e8;"></div>
<div class="r" style="left:474.90px;top:291.36px;width:76.90px;height:14.60px;background:#e8e8e8;"></div>
<div class="a" style="left:48.29px;top:295.40px;width:300px;text-align:center;font-size:10.40px;letter-spacing:0.687px;">02 Jan 2010</div>
<div class="a" style="left:127.19px;top:295.40px;width:300px;text-align:center;font-size:10.40px;letter-spacing:0.788px;">43</div>
<div class="a" style="left:206.04px;top:295.40px;width:300px;text-align:center;font-size:10.40px;letter-spacing:0.788px;">951</div>
<div class="a" style="left:284.89px;top:295.40px;width:300px;text-align:center;font-size:10.40px;letter-spacing:0.788px;">1933</div>
<div class="a" style="left:363.68px;top:295.40px;width:300px;text-align:center;font-size:10.40px;letter-spacing:0.657px;">26.61 MB</div>
<div class="r" style="left:159.50px;top:307.31px;width:76.90px;height:14.60px;background:#e8e8e8;"></div>
<div class="r" style="left:238.35px;top:307.31px;width:76.90px;height:14.60px;background:#e8e8e8;"></div>
<div class="r" style="left:317.20px;top:307.31px;width:76.90px;height:14.60px;background:#e8e8e8;"></div>
<div class="r" style="left:396.05px;top:307.31px;width:76.90px;height:14.60px;background:#e8e8e8;"></div>
<div class="r" style="left:474.90px;top:307.31px;width:76.90px;height:14.60px;background:#e8e8e8;"></div>
<div class="a" style="left:48.29px;top:311.36px;width:300px;text-align:center;font-size:10.40px;letter-spacing:0.687px;">03 Jan 2010</div>
<div class="a" style="left:127.19px;top:311.36px;width:300px;text-align:center;font-size:10.40px;letter-spacing:0.788px;">33</div>
<div class="a" style="left:206.04px;top:311.36px;width:300px;text-align:center;font-size:10.40px;letter-spacing:0.788px;">481</div>
<div class="a" style="left:284.99px;top:311.36px;width:300px;text-align:center;font-size:10.40px;letter-spacing:0.984px;">1120</div>
<div class="a" style="left:363.68px;top:311.36px;width:300px;text-align:center;font-size:10.40px;letter-spacing:0.657px;">14.07 MB</div>
<div class="a" style="left:48.29px;top:327.31px;width:300px;text-align:center;font-size:10.40px;letter-spacing:0.687px;">04 Jan 2010</div>
<div class="a" style="left:127.19px;top:327.31px;width:300px;text-align:center;font-size:10.40px;letter-spacing:0.788px;">87</div>
<div class="a" style="left:206.04px;top:327.31px;width:300px;text-align:center;font-size:10.40px;letter-spacing:0.788px;">1690</div>
<div class="a" style="left:284.89px;top:327.31px;width:300px;text-align:center;font-size:10.40px;letter-spacing:0.788px;">3880</div>
<div class="a" style="left:363.68px;top:327.31px;width:300px;text-align:center;font-size:10.40px;letter-spacing:0.657px;">47.98 MB</div>
<div class="a" style="left:48.29px;top:343.27px;width:300px;text-align:center;font-size:10.40px;letter-spacing:0.687px;">05 Jan 2010</div>
<div class="a" style="left:127.19px;top:343.27px;width:300px;text-align:center;font-size:10.40px;letter-spacing:0.788px;">70</div>
<div class="a" style="left:206.04px;top:343.27px;width:300px;text-align:center;font-size:10.40px;letter-spacing:0.788px;">1364</div>
<div class="a" style="left:284.89px;top:343.27px;width:300px;text-align:center;font-size:10.40px;letter-spacing:0.788px;">3244</div>
<div class="a" style="left:363.68px;top:343.27px;width:300px;text-align:center;font-size:10.40px;letter-spacing:0.657px;">39.67 MB</div>
<div class="a" style="left:48.29px;top:359.22px;width:300px;text-align:center;font-size:10.40px;letter-spacing:0.687px;">06 Jan 2010</div>
<div class="a" style="left:127.19px;top:359.22px;width:300px;text-align:center;font-size:10.40px;letter-spacing:0.788px;">89</div>
<div class="a" style="left:206.04px;top:359.22px;width:300px;text-align:center;font-size:10.40px;letter-spacing:0.788px;">1786</div>
<div class="a" style="left:284.89px;top:359.22px;width:300px;text-align:center;font-size:10.40px;letter-spacing:0.788px;">3978</div>
<div class="a" style="left:363.68px;top:359.22px;width:300px;text-align:center;font-size:10.40px;letter-spacing:0.657px;">56.05 MB</div>
<div class="a" style="left:48.29px;top:375.18px;width:300px;text-align:center;font-size:10.40px;letter-spacing:0.687px;">07 Jan 2010</div>
<div class="a" style="left:127.19px;top:375.18px;width:300px;text-align:center;font-size:10.40px;letter-spacing:0.788px;">89</div>
<div class="a" style="left:206.04px;top:375.18px;width:300px;text-align:center;font-size:10.40px;letter-spacing:0.788px;">1889</div>
<div class="a" style="left:284.89px;top:375.18px;width:300px;text-align:center;font-size:10.40px;letter-spacing:0.788px;">4142</div>
<div class="a" style="left:363.68px;top:375.18px;width:300px;text-align:center;font-size:10.40px;letter-spacing:0.657px;">58.91 MB</div>
<div class="a" style="left:48.29px;top:391.13px;width:300px;text-align:center;font-size:10.40px;letter-spacing:0.687px;">08 Jan 2010</div>
<div class="a" style="left:127.19px;top:391.13px;width:300px;text-align:center;font-size:10.40px;letter-spacing:0.788px;">89</div>
<div class="a" style="left:206.04px;top:391.13px;width:300px;text-align:center;font-size:10.40px;letter-spacing:0.788px;">1800</div>
<div class="a" style="left:284.89px;top:391.13px;width:300px;text-align:center;font-size:10.40px;letter-spacing:0.788px;">3945</div>
<div class="a" style="left:363.68px;top:391.13px;width:300px;text-align:center;font-size:10.40px;letter-spacing:0.657px;">57.36 MB</div>
<div class="r" style="left:159.50px;top:403.04px;width:76.90px;height:14.60px;background:#e8e8e8;"></div>
<div class="r" style="left:238.35px;top:403.04px;width:76.90px;height:14.60px;background:#e8e8e8;"></div>
<div class="r" style="left:317.20px;top:403.04px;width:76.90px;height:14.60px;background:#e8e8e8;"></div>
<div class="r" style="left:396.05px;top:403.04px;width:76.90px;height:14.60px;background:#e8e8e8;"></div>
<div class="r" style="left:474.90px;top:403.04px;width:76.90px;height:14.60px;background:#e8e8e8;"></div>
<div class="a" style="left:48.29px;top:407.09px;width:300px;text-align:center;font-size:10.40px;letter-spacing:0.687px;">09 Jan 2010</div>
<div class="a" style="left:127.19px;top:407.09px;width:300px;text-align:center;font-size:10.40px;letter-spacing:0.788px;">64</div>
<div class="a" style="left:206.14px;top:407.09px;width:300px;text-align:center;font-size:10.40px;letter-spacing:0.984px;">1179</div>
<div class="a" style="left:284.89px;top:407.09px;width:300px;text-align:center;font-size:10.40px;letter-spacing:0.788px;">2656</div>
<div class="a" style="left:363.68px;top:407.09px;width:300px;text-align:center;font-size:10.40px;letter-spacing:0.657px;">37.44 MB</div>
<div class="r" style="left:159.50px;top:419.00px;width:76.90px;height:14.60px;background:#e8e8e8;"></div>
<div class="r" style="left:238.35px;top:419.00px;width:76.90px;height:14.60px;background:#e8e8e8;"></div>
<div class="r" style="left:317.20px;top:419.00px;width:76.90px;height:14.60px;background:#e8e8e8;"></div>
<div class="r" style="left:396.05px;top:419.00px;width:76.90px;height:14.60px;background:#e8e8e8;"></div>
<div class="r" style="left:474.90px;top:419.00px;width:76.90px;height:14.60px;background:#e8e8e8;"></div>
<div class="a" style="left:48.29px;top:423.05px;width:300px;text-align:center;font-size:10.40px;letter-spacing:0.687px;">10 Jan 2010</div>
<div class="a" style="left:127.19px;top:423.05px;width:300px;text-align:center;font-size:10.40px;letter-spacing:0.788px;">36</div>
<div class="a" style="left:206.04px;top:423.05px;width:300px;text-align:center;font-size:10.40px;letter-spacing:0.788px;">397</div>
<div class="a" style="left:284.89px;top:423.05px;width:300px;text-align:center;font-size:10.40px;letter-spacing:0.788px;">907</div>
<div class="a" style="left:363.68px;top:423.05px;width:300px;text-align:center;font-size:10.40px;letter-spacing:0.657px;">12.77 MB</div>
<div class="a" style="left:48.33px;top:439.00px;width:300px;text-align:center;font-size:10.40px;letter-spacing:0.756px;">11 Jan 2010</div>
<div class="a" style="left:127.19px;top:439.00px;width:300px;text-align:center;font-size:10.40px;letter-spacing:0.788px;">96</div>
<div class="a" style="left:206.04px;top:439.00px;width:300px;text-align:center;font-size:10.40px;letter-spacing:0.788px;">1681</div>
<div class="a" style="left:284.89px;top:439.00px;width:300px;text-align:center;font-size:10.40px;letter-spacing:0.788px;">4033</div>
<div class="a" style="left:363.68px;top:439.00px;width:300px;text-align:center;font-size:10.40px;letter-spacing:0.657px;">49.86 MB</div>
<div class="a" style="left:48.29px;top:454.95px;width:300px;text-align:center;font-size:10.40px;letter-spacing:0.687px;">12 Jan 2010</div>
<div class="a" style="left:127.19px;top:454.95px;width:300px;text-align:center;font-size:10.40px;letter-spacing:0.788px;">96</div>
<div class="a" style="left:206.04px;top:454.95px;width:300px;text-align:center;font-size:10.40px;letter-spacing:0.788px;">1406</div>
<div class="a" style="left:284.89px;top:454.95px;width:300px;text-align:center;font-size:10.40px;letter-spacing:0.788px;">2981</div>
<div class="a" style="left:363.68px;top:454.95px;width:300px;text-align:center;font-size:10.40px;letter-spacing:0.657px;">35.20 MB</div>
<div class="a" style="left:48.29px;top:470.91px;width:300px;text-align:center;font-size:10.40px;letter-spacing:0.687px;">13 Jan 2010</div>
<div class="a" style="left:127.19px;top:470.91px;width:300px;text-align:center;font-size:10.40px;letter-spacing:0.788px;">95</div>
<div class="a" style="left:206.04px;top:470.91px;width:300px;text-align:center;font-size:10.40px;letter-spacing:0.788px;">1388</div>
<div class="a" style="left:284.89px;top:470.91px;width:300px;text-align:center;font-size:10.40px;letter-spacing:0.788px;">2539</div>
<div class="a" style="left:363.68px;top:470.91px;width:300px;text-align:center;font-size:10.40px;letter-spacing:0.657px;">34.14 MB</div>
<div class="a" style="left:48.29px;top:486.86px;width:300px;text-align:center;font-size:10.40px;letter-spacing:0.687px;">14 Jan 2010</div>
<div class="a" style="left:127.19px;top:486.86px;width:300px;text-align:center;font-size:10.40px;letter-spacing:0.788px;">78</div>
<div class="a" style="left:206.04px;top:486.86px;width:300px;text-align:center;font-size:10.40px;letter-spacing:0.788px;">986</div>
<div class="a" style="left:284.89px;top:486.86px;width:300px;text-align:center;font-size:10.40px;letter-spacing:0.788px;">1998</div>
<div class="a" style="left:363.68px;top:486.86px;width:300px;text-align:center;font-size:10.40px;letter-spacing:0.657px;">24.47 MB</div>
<div class="a" style="left:48.29px;top:502.82px;width:300px;text-align:center;font-size:10.40px;letter-spacing:0.687px;">15 Jan 2010</div>
<div class="a" style="left:127.19px;top:502.82px;width:300px;text-align:center;font-size:10.40px;letter-spacing:0.788px;">95</div>
<div class="a" style="left:206.04px;top:502.82px;width:300px;text-align:center;font-size:10.40px;letter-spacing:0.788px;">1651</div>
<div class="a" style="left:284.89px;top:502.82px;width:300px;text-align:center;font-size:10.40px;letter-spacing:0.788px;">2996</div>
<div class="a" style="left:363.68px;top:502.82px;width:300px;text-align:center;font-size:10.40px;letter-spacing:0.657px;">40.29 MB</div>
<div class="r" style="left:159.50px;top:514.72px;width:76.90px;height:14.60px;background:#e8e8e8;"></div>
<div class="r" style="left:238.35px;top:514.72px;width:76.90px;height:14.60px;background:#e8e8e8;"></div>
<div class="r" style="left:317.20px;top:514.72px;width:76.90px;height:14.60px;background:#e8e8e8;"></div>
<div class="r" style="left:396.05px;top:514.72px;width:76.90px;height:14.60px;background:#e8e8e8;"></div>
<div class="r" style="left:474.90px;top:514.72px;width:76.90px;height:14.60px;background:#e8e8e8;"></div>
<div class="a" style="left:48.29px;top:518.77px;width:300px;text-align:center;font-size:10.40px;letter-spacing:0.687px;">16 Jan 2010</div>
<div class="a" style="left:127.19px;top:518.77px;width:300px;text-align:center;font-size:10.40px;letter-spacing:0.788px;">71</div>
<div class="a" style="left:206.04px;top:518.77px;width:300px;text-align:center;font-size:10.40px;letter-spacing:0.788px;">1263</div>
<div class="a" style="left:284.89px;top:518.77px;width:300px;text-align:center;font-size:10.40px;letter-spacing:0.788px;">2730</div>
<div class="a" style="left:363.68px;top:518.77px;width:300px;text-align:center;font-size:10.40px;letter-spacing:0.657px;">33.96 MB</div>
<div class="r" style="left:159.50px;top:530.68px;width:76.90px;height:14.60px;background:#e8e8e8;"></div>
<div class="r" style="left:238.35px;top:530.68px;width:76.90px;height:14.60px;background:#e8e8e8;"></div>
<div class="r" style="left:317.20px;top:530.68px;width:76.90px;height:14.60px;background:#e8e8e8;"></div>
<div class="r" style="left:396.05px;top:530.68px;width:76.90px;height:14.60px;background:#e8e8e8;"></div>
<div class="r" style="left:474.90px;top:530.68px;width:76.90px;height:14.60px;background:#e8e8e8;"></div>
<div class="a" style="left:48.29px;top:534.73px;width:300px;text-align:center;font-size:10.40px;letter-spacing:0.687px;">17 Jan 2010</div>
<div class="a" style="left:127.19px;top:534.73px;width:300px;text-align:center;font-size:10.40px;letter-spacing:0.788px;">43</div>
<div class="a" style="left:206.04px;top:534.73px;width:300px;text-align:center;font-size:10.40px;letter-spacing:0.788px;">496</div>
<div class="a" style="left:284.89px;top:534.73px;width:300px;text-align:center;font-size:10.40px;letter-spacing:0.788px;">922</div>
<div class="a" style="left:363.68px;top:534.73px;width:300px;text-align:center;font-size:10.40px;letter-spacing:0.657px;">12.70 MB</div>
<div class="a" style="left:48.29px;top:550.69px;width:300px;text-align:center;font-size:10.40px;letter-spacing:0.687px;">18 Jan 2010</div>
<div class="a" style="left:127.19px;top:550.69px;width:300px;text-align:center;font-size:10.40px;letter-spacing:0.788px;">122</div>
<div class="a" style="left:206.04px;top:550.69px;width:300px;text-align:center;font-size:10.40px;letter-spacing:0.788px;">1937</div>
<div class="a" style="left:284.89px;top:550.69px;width:300px;text-align:center;font-size:10.40px;letter-spacing:0.788px;">3637</div>
<div class="a" style="left:363.68px;top:550.69px;width:300px;text-align:center;font-size:10.40px;letter-spacing:0.657px;">47.79 MB</div>
<div class="a" style="left:48.29px;top:566.64px;width:300px;text-align:center;font-size:10.40px;letter-spacing:0.687px;">19 Jan 2010</div>
<div class="a" style="left:127.32px;top:566.64px;width:300px;text-align:center;font-size:10.40px;letter-spacing:1.043px;">113</div>
<div class="a" style="left:206.04px;top:566.64px;width:300px;text-align:center;font-size:10.40px;letter-spacing:0.788px;">1370</div>
<div class="a" style="left:284.89px;top:566.64px;width:300px;text-align:center;font-size:10.40px;letter-spacing:0.788px;">2690</div>
<div class="a" style="left:363.68px;top:566.64px;width:300px;text-align:center;font-size:10.40px;letter-spacing:0.657px;">35.07 MB</div>
<div class="a" style="left:48.29px;top:582.60px;width:300px;text-align:center;font-size:10.40px;letter-spacing:0.687px;">20 Jan 2010</div>
<div class="a" style="left:127.19px;top:582.60px;width:300px;text-align:center;font-size:10.40px;letter-spacing:0.788px;">81</div>
<div class="a" style="left:206.04px;top:582.60px;width:300px;text-align:center;font-size:10.40px;letter-spacing:0.788px;">1030</div>
<div class="a" style="left:284.89px;top:582.60px;width:300px;text-align:center;font-size:10.40px;letter-spacing:0.788px;">2016</div>
<div class="a" style="left:363.68px;top:582.60px;width:300px;text-align:center;font-size:10.40px;letter-spacing:0.657px;">26.87 MB</div>
<div class="a" style="left:48.29px;top:598.55px;width:300px;text-align:center;font-size:10.40px;letter-spacing:0.687px;">21 Jan 2010</div>
<div class="a" style="left:127.19px;top:598.55px;width:300px;text-align:center;font-size:10.40px;letter-spacing:0.788px;">132</div>
<div class="a" style="left:206.04px;top:598.55px;width:300px;text-align:center;font-size:10.40px;letter-spacing:0.788px;">1810</div>
<div class="a" style="left:284.89px;top:598.55px;width:300px;text-align:center;font-size:10.40px;letter-spacing:0.788px;">3494</div>
<div class="a" style="left:363.68px;top:598.55px;width:300px;text-align:center;font-size:10.40px;letter-spacing:0.657px;">46.06 MB</div>
<div class="a" style="left:48.52px;top:614.50px;width:300px;text-align:center;font-size:10.40px;letter-spacing:1.150px;font-weight:bold;-webkit-text-stroke:0.25px currentColor;">22 Jan 2010</div>
<div class="a" style="left:127.19px;top:614.50px;width:300px;text-align:center;font-size:10.40px;letter-spacing:0.788px;">21</div>
<div class="a" style="left:206.04px;top:614.50px;width:300px;text-align:center;font-size:10.40px;letter-spacing:0.788px;">574</div>
<div class="a" style="left:284.89px;top:614.50px;width:300px;text-align:center;font-size:10.40px;letter-spacing:0.788px;">1034</div>
<div class="a" style="left:363.68px;top:614.50px;width:300px;text-align:center;font-size:10.40px;letter-spacing:0.657px;">18.86 MB</div>
<div class="r" style="left:159.50px;top:626.41px;width:76.90px;height:14.60px;background:#e8e8e8;"></div>
<div class="r" style="left:238.35px;top:626.41px;width:76.90px;height:14.60px;background:#e8e8e8;"></div>
<div class="r" style="left:317.20px;top:626.41px;width:76.90px;height:14.60px;background:#e8e8e8;"></div>
<div class="r" style="left:396.05px;top:626.41px;width:76.90px;height:14.60px;background:#e8e8e8;"></div>
<div class="r" style="left:474.90px;top:626.41px;width:76.90px;height:14.60px;background:#e8e8e8;"></div>
<div class="a" style="left:48.29px;top:630.46px;width:300px;text-align:center;font-size:10.40px;letter-spacing:0.687px;">23 Jan 2010</div>
<div class="a" style="left:127.19px;top:630.46px;width:300px;text-align:center;font-size:10.40px;letter-spacing:0.788px;">0</div>
<div class="a" style="left:206.04px;top:630.46px;width:300px;text-align:center;font-size:10.40px;letter-spacing:0.788px;">0</div>
<div class="a" style="left:284.89px;top:630.46px;width:300px;text-align:center;font-size:10.40px;letter-spacing:0.788px;">0</div>
<div class="a" style="left:363.74px;top:630.46px;width:300px;text-align:center;font-size:10.40px;letter-spacing:0.788px;">0</div>
<div class="r" style="left:159.50px;top:642.37px;width:76.90px;height:14.60px;background:#e8e8e8;"></div>
<div class="r" style="left:238.35px;top:642.37px;width:76.90px;height:14.60px;background:#e8e8e8;"></div>
<div class="r" style="left:317.20px;top:642.37px;width:76.90px;height:14.60px;background:#e8e8e8;"></div>
<div class="r" style="left:396.05px;top:642.37px;width:76.90px;height:14.60px;background:#e8e8e8;"></div>
<div class="r" style="left:474.90px;top:642.37px;width:76.90px;height:14.60px;background:#e8e8e8;"></div>
<div class="a" style="left:48.29px;top:646.42px;width:300px;text-align:center;font-size:10.40px;letter-spacing:0.687px;">24 Jan 2010</div>
<div class="a" style="left:127.19px;top:646.42px;width:300px;text-align:center;font-size:10.40px;letter-spacing:0.788px;">0</div>
<div class="a" style="left:206.04px;top:646.42px;width:300px;text-align:center;font-size:10.40px;letter-spacing:0.788px;">0</div>
<div class="a" style="left:284.89px;top:646.42px;width:300px;text-align:center;font-size:10.40px;letter-spacing:0.788px;">0</div>
<div class="a" style="left:363.74px;top:646.42px;width:300px;text-align:center;font-size:10.40px;letter-spacing:0.788px;">0</div>
<div class="a" style="left:48.29px;top:662.37px;width:300px;text-align:center;font-size:10.40px;letter-spacing:0.687px;">25 Jan 2010</div>
<div class="a" style="left:127.19px;top:662.37px;width:300px;text-align:center;font-size:10.40px;letter-spacing:0.788px;">0</div>
<div class="a" style="left:206.04px;top:662.37px;width:300px;text-align:center;font-size:10.40px;letter-spacing:0.788px;">0</div>
<div class="a" style="left:284.89px;top:662.37px;width:300px;text-align:center;font-size:10.40px;letter-spacing:0.788px;">0</div>
<div class="a" style="left:363.74px;top:662.37px;width:300px;text-align:center;font-size:10.40px;letter-spacing:0.788px;">0</div>
<div class="a" style="left:48.29px;top:678.33px;width:300px;text-align:center;font-size:10.40px;letter-spacing:0.687px;">26 Jan 2010</div>
<div class="a" style="left:127.19px;top:678.33px;width:300px;text-align:center;font-size:10.40px;letter-spacing:0.788px;">0</div>
<div class="a" style="left:206.04px;top:678.33px;width:300px;text-align:center;font-size:10.40px;letter-spacing:0.788px;">0</div>
<div class="a" style="left:284.89px;top:678.33px;width:300px;text-align:center;font-size:10.40px;letter-spacing:0.788px;">0</div>
<div class="a" style="left:363.74px;top:678.33px;width:300px;text-align:center;font-size:10.40px;letter-spacing:0.788px;">0</div>
<div class="a" style="left:48.29px;top:694.28px;width:300px;text-align:center;font-size:10.40px;letter-spacing:0.687px;">27 Jan 2010</div>
<div class="a" style="left:127.19px;top:694.28px;width:300px;text-align:center;font-size:10.40px;letter-spacing:0.788px;">0</div>
<div class="a" style="left:206.04px;top:694.28px;width:300px;text-align:center;font-size:10.40px;letter-spacing:0.788px;">0</div>
<div class="a" style="left:284.89px;top:694.28px;width:300px;text-align:center;font-size:10.40px;letter-spacing:0.788px;">0</div>
<div class="a" style="left:363.74px;top:694.28px;width:300px;text-align:center;font-size:10.40px;letter-spacing:0.788px;">0</div>
<div class="a" style="left:48.29px;top:710.24px;width:300px;text-align:center;font-size:10.40px;letter-spacing:0.687px;">28 Jan 2010</div>
<div class="a" style="left:127.19px;top:710.24px;width:300px;text-align:center;font-size:10.40px;letter-spacing:0.788px;">0</div>
<div class="a" style="left:206.04px;top:710.24px;width:300px;text-align:center;font-size:10.40px;letter-spacing:0.788px;">0</div>
<div class="a" style="left:284.89px;top:710.24px;width:300px;text-align:center;font-size:10.40px;letter-spacing:0.788px;">0</div>
<div class="a" style="left:363.74px;top:710.24px;width:300px;text-align:center;font-size:10.40px;letter-spacing:0.788px;">0</div>
</div>
<div class="r" style="left:945px;top:6px;width:16px;height:698px;background:linear-gradient(90deg,#fbfaf6,#f4f3ec 30%,#f3f2ea)"></div>
<div class="r" style="left:946px;top:7px;width:14px;height:15px;background:linear-gradient(160deg,#dae6fc,#c2d4f7);border:1px solid #e6eefc;border-radius:2px;box-shadow:0 0 0 1px #d0dcf4"></div>
<svg class="r" style="left:945px;top:6px" width="16" height="18"><polyline points="4.2,9 7.9,5.2 11.5,9" fill="none" stroke="#34446c" stroke-width="2.2"/></svg>
<div class="r" style="left:946px;top:103px;width:15px;height:94px;background:linear-gradient(90deg,#c4d4fa,#bccdf8 60%,#b4c6f2);border:1px solid #d6e2fc;border-radius:2px;box-shadow:0 0 0 1px #c4d2f0"></div>
<div class="r" style="left:950px;top:147.5px;width:8px;height:1px;background:#e6edfd"></div>
<div class="r" style="left:950px;top:149.5px;width:8px;height:1px;background:#e6edfd"></div>
<div class="r" style="left:950px;top:151.5px;width:8px;height:1px;background:#e6edfd"></div>
<div class="r" style="left:950px;top:153.5px;width:8px;height:1px;background:#e6edfd"></div>
<div class="r" style="left:946px;top:689px;width:14px;height:15px;background:linear-gradient(160deg,#dae6fc,#c2d4f7);border:1px solid #e6eefc;border-radius:2px;box-shadow:0 0 0 1px #d0dcf4"></div>
<svg class="r" style="left:945px;top:684px" width="16" height="18"><polyline points="4.2,11.8 8,15 11.4,11.8" fill="none" stroke="#34446c" stroke-width="2.2"/></svg>
<div class="r" style="left:232px;top:704px;width:713px;height:17px;background:linear-gradient(180deg,#ecebe3,#f2f1ea 25%,#f6f6f0 80%,#ebeae2)"></div>
<div class="r" style="left:232px;top:705px;width:14px;height:16px;background:#f4f3ec;border:1px solid #e4e2d8"></div>
<div class="r" style="left:930px;top:705px;width:14px;height:16px;background:#f4f3ec;border:1px solid #e4e2d8"></div>
<div class="r" style="left:945px;top:704px;width:16px;height:17px;background:#eeede5"></div>
<svg class="r" style="left:232px;top:704px" width="16" height="17"><polyline points="9,4.5 5.5,8.5 9,12.5" fill="none" stroke="#d2d1c6" stroke-width="2"/></svg>
<svg class="r" style="left:929px;top:704px" width="16" height="17"><polyline points="6,4.5 9.5,8.5 6,12.5" fill="none" stroke="#d2d1c6" stroke-width="2"/></svg>
</body></html>
